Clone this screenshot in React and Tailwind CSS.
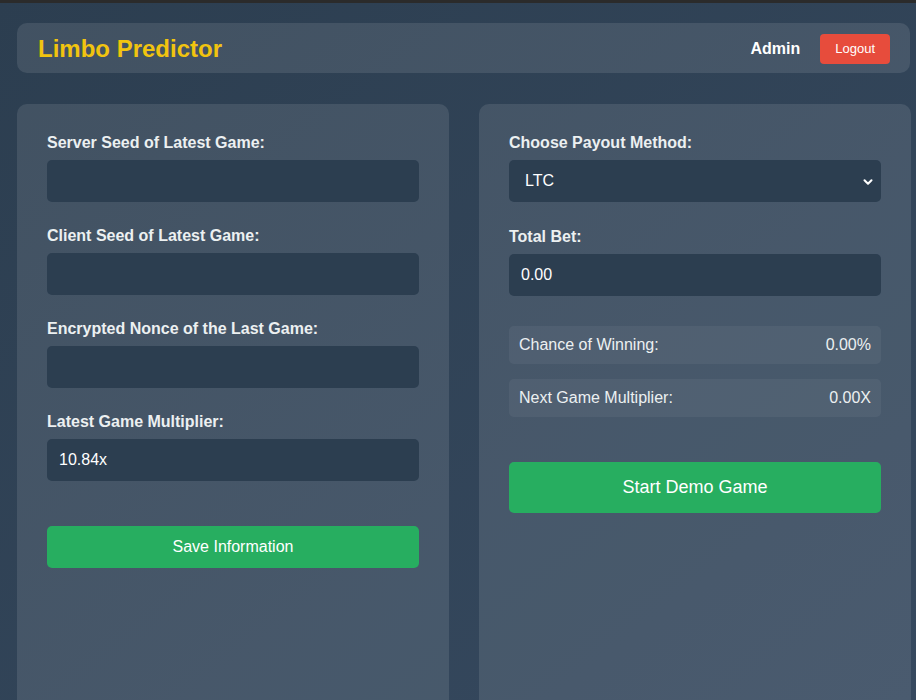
import { ChevronDown } from 'lucide-react';

const fieldsLeft = [
  { label: 'Server Seed of Latest Game:', value: '' },
  { label: 'Client Seed of Latest Game:', value: '' },
  { label: 'Encrypted Nonce of the Last Game:', value: '' },
  { label: 'Latest Game Multiplier:', value: '10.84x' },
];

const stats = [
  { label: 'Chance of Winning:', value: '0.00%' },
  { label: 'Next Game Multiplier:', value: '0.00X' },
];

function Field({ label, value }) {
  return (
    <div className="flex flex-col">
      <label className="text-[16px] leading-[18px] font-bold text-[#ecf0f1] mb-[8px]">{label}</label>
      <input
        defaultValue={value}
        className="h-[42px] w-full rounded-[5px] bg-[#2c3e50] px-[12px] text-[16px] text-white outline-none"
      />
    </div>
  );
}

export default function App() {
  return (
    <div
      className="h-[700px] overflow-hidden bg-gradient-to-br from-[#2c3e50] to-[#36495f] text-white"
      style={{ fontFamily: '"Liberation Sans", Arial, sans-serif' }}
    >
      <div className="h-[3px] bg-[#2b2b2b]" />

      <div className="ml-[17px] w-[894px] pt-[20px]">
        {/* Header */}
        <header className="h-[50px] w-[893px] rounded-[10px] bg-white/10 flex items-center justify-between pl-[21px] pr-[20px] pt-[1px]">
          <h1 className="text-[24px] font-bold text-[#f1c40f]">Limbo Predictor</h1>
          <div className="flex items-center gap-[20px]">
            <span className="text-[16px] font-bold text-white">Admin</span>
            <button className="h-[30px] px-[15px] rounded-[4px] bg-[#e74c3c] text-[13px] text-white">Logout</button>
          </div>
        </header>

        <div className="mt-[31px] grid grid-cols-[432px_432px] gap-[30px]">
          {/* Left card */}
          <section className="h-[640px] rounded-[10px] bg-white/10 p-[30px]">
            <div className="flex flex-col gap-[25px]">
              {fieldsLeft.map(f => <Field key={f.label} {...f} />)}
            </div>
            <button className="mt-[45px] h-[42px] w-full rounded-[5px] bg-[#27ae60] text-[16px] text-white">
              Save Information
            </button>
          </section>

          {/* Right card */}
          <section className="h-[640px] rounded-[10px] bg-white/10 p-[30px]">
            <div className="flex flex-col">
              <label className="text-[16px] leading-[18px] font-bold text-[#ecf0f1] mb-[8px]">Choose Payout Method:</label>
              <div className="relative">
                <select className="appearance-none h-[42px] w-full rounded-[5px] bg-[#2c3e50] pl-[16px] text-[16px] text-white outline-none">
                  <option>LTC</option>
                </select>
                <ChevronDown size={14} strokeWidth={3.5} className="absolute right-[6px] top-[15px] text-white pointer-events-none" />
              </div>
            </div>

            <div className="mt-[26px] flex flex-col">
              <label className="text-[16px] leading-[18px] font-bold text-[#ecf0f1] mb-[8px]">Total Bet:</label>
              <input
                defaultValue="0.00"
                className="h-[42px] w-full rounded-[5px] bg-[#2c3e50] px-[12px] text-[16px] text-white outline-none"
              />
            </div>

            <div className="mt-[30px] flex flex-col gap-[15px]">
              {stats.map(s => (
                <div key={s.label} className="h-[38px] rounded-[5px] bg-white/5 px-[10px] flex items-center justify-between text-[16px] text-[#ecf0f1]">
                  <span>{s.label}</span>
                  <span>{s.value}</span>
                </div>
              ))}
            </div>

            <button className="mt-[45px] h-[51px] w-full rounded-[5px] bg-[#27ae60] text-[18px] text-white">
              Start Demo Game
            </button>
          </section>
        </div>
      </div>
    </div>
  );
}
